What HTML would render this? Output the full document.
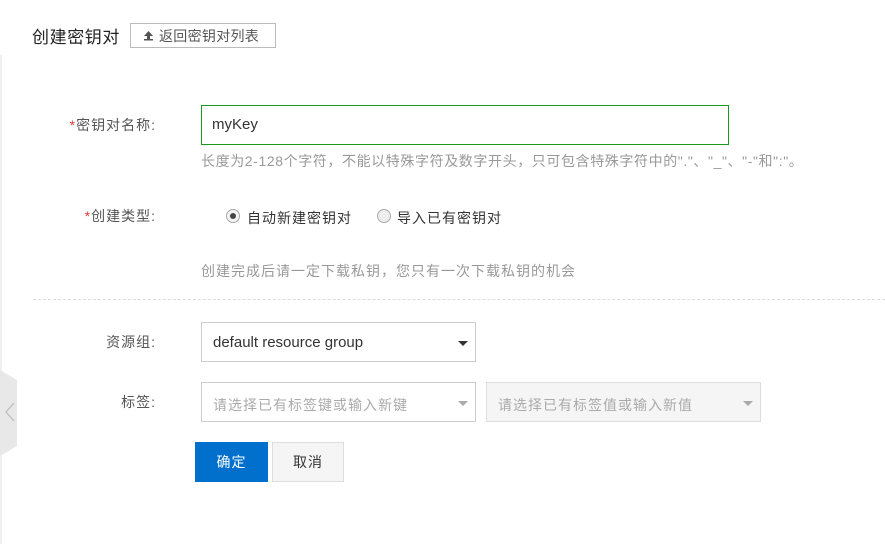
<!DOCTYPE html>
<html><head><meta charset="utf-8"><style>
*{margin:0;padding:0;box-sizing:border-box}
body{width:885px;height:544px;background:#fff;position:relative;overflow:hidden;font-family:"Liberation Sans","Noto Sans CJK SC",sans-serif;color:#333;font-size:14px;letter-spacing:1px}
.a{position:absolute;white-space:nowrap}
.lbl{position:absolute;right:729px;font-size:14px;color:#555}
.star{color:#e4393c}
.box{position:absolute;border:1px solid #ccc;background:#fff}
.caret{position:absolute;width:0;height:0;border-left:5px solid transparent;border-right:5px solid transparent;border-top:5px solid #333}
.hint{color:#999;font-size:14px}
</style></head><body>
<div class="a" style="left:0;top:0;width:2px;height:544px;background:#f0f0f0"></div>
<div class="a" style="left:0;top:0;width:2px;height:55px;background:#fff"></div>
<svg class="a" style="left:0;top:370px" width="20" height="86"><polygon points="0,0 17,10 17,76 0,86" fill="#e8e8e8"/><polyline points="14,33 6,42 14,51" fill="none" stroke="#bbb" stroke-width="1.2"/></svg>
<div class="a" style="left:32px;top:23px;font-size:17px;color:#222;letter-spacing:0.6px">创建密钥对</div>
<div class="box" style="left:130px;top:23px;width:146px;height:25px;border-color:#bbb"></div>
<svg class="a" style="left:143px;top:30px" width="12" height="12"><polygon points="5.5,1 10,6 1,6" fill="#555"/><rect x="4" y="6" width="3" height="3" fill="#555"/><rect x="1" y="9" width="9" height="1.5" fill="#555"/></svg>
<div class="a" style="left:159px;top:26px;font-size:14px;color:#555;letter-spacing:0.3px">返回密钥对列表</div>

<div class="lbl" style="top:115px"><span class="star">*</span>密钥对名称:</div>
<div class="box" style="left:201px;top:105px;width:528px;height:40px;border-color:#1a9a1a"></div>
<div class="a" style="left:212px;top:116px;font-size:15px;color:#333;letter-spacing:0">myKey</div>
<div class="a hint" style="left:201px;top:151px;letter-spacing:0.6px">长度为2-128个字符，不能以特殊字符及数字开头，只可包含特殊字符中的"."、"_"、"-"和":"。</div>

<div class="lbl" style="top:206px"><span class="star">*</span>创建类型:</div>
<div class="a" style="left:226px;top:209px;width:14px;height:14px;border-radius:50%;border:1px solid #aaa;background:#f3f3f3"></div>
<div class="a" style="left:230px;top:213px;width:6px;height:6px;border-radius:50%;background:#444"></div>
<div class="a" style="left:247px;top:208px">自动新建密钥对</div>
<div class="a" style="left:377px;top:209px;width:14px;height:14px;border-radius:50%;border:1px solid #aaa;background:#eee"></div>
<div class="a" style="left:397px;top:208px">导入已有密钥对</div>
<div class="a hint" style="left:201px;top:261px">创建完成后请一定下载私钥，您只有一次下载私钥的机会</div>
<div class="a" style="left:33px;top:299px;width:852px;border-top:1px dashed #ddd"></div>

<div class="lbl" style="top:332px">资源组:</div>
<div class="box" style="left:201px;top:322px;width:275px;height:40px"></div>
<div class="a" style="left:213px;top:334px;font-size:15px;letter-spacing:0">default resource group</div>
<div class="caret" style="left:458px;top:341px"></div>

<div class="lbl" style="top:392px">标签:</div>
<div class="box" style="left:201px;top:382px;width:275px;height:40px"></div>
<div class="a" style="left:213px;top:395px;color:#aaa">请选择已有标签键或输入新键</div>
<div class="caret" style="left:458px;top:401px;border-top-color:#aaa"></div>
<div class="box" style="left:486px;top:382px;width:275px;height:40px;background:#f5f5f5;border-color:#ddd"></div>
<div class="a" style="left:498px;top:395px;color:#aaa">请选择已有标签值或输入新值</div>
<div class="caret" style="left:743px;top:401px;border-top-color:#aaa"></div>

<div class="a" style="left:195px;top:442px;width:73px;height:40px;background:#0070cc;color:#fff;text-align:center;line-height:40px">确定</div>
<div class="a" style="left:272px;top:442px;width:72px;height:40px;background:#f5f5f5;border:1px solid #ddd;text-align:center;line-height:38px;color:#333">取消</div>
</body></html>
